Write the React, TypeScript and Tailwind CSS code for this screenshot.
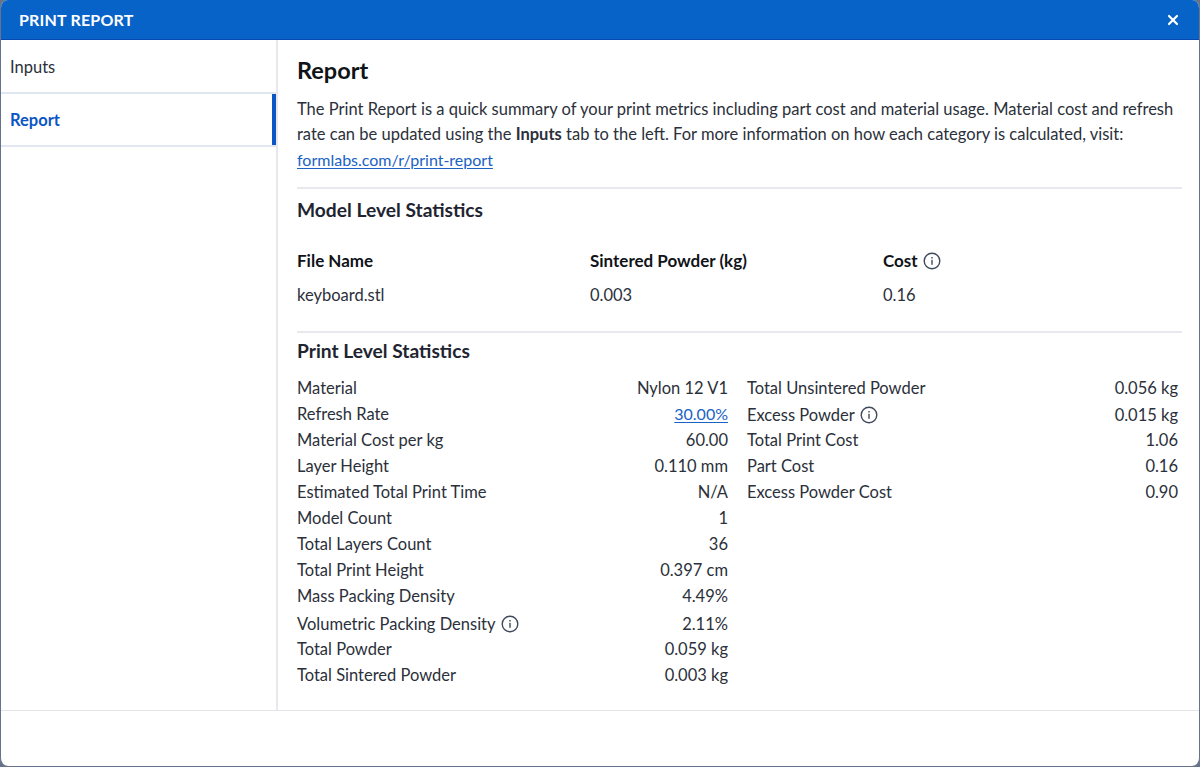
import { X } from "lucide-react";

type Row = { label: string; value: string; info?: boolean; link?: boolean; tall?: boolean };

const leftRows: Row[] = [
  { label: "Material", value: "Nylon 12 V1" },
  { label: "Refresh Rate", value: "30.00%", link: true },
  { label: "Material Cost per kg", value: "60.00" },
  { label: "Layer Height", value: "0.110 mm" },
  { label: "Estimated Total Print Time", value: "N/A" },
  { label: "Model Count", value: "1" },
  { label: "Total Layers Count", value: "36" },
  { label: "Total Print Height", value: "0.397 cm" },
  { label: "Mass Packing Density", value: "4.49%" },
  { label: "Volumetric Packing Density", value: "2.11%", info: true, tall: true },
  { label: "Total Powder", value: "0.059 kg" },
  { label: "Total Sintered Powder", value: "0.003 kg" },
];

const rightRows: Row[] = [
  { label: "Total Unsintered Powder", value: "0.056 kg" },
  { label: "Excess Powder", value: "0.015 kg", info: true },
  { label: "Total Print Cost", value: "1.06" },
  { label: "Part Cost", value: "0.16" },
  { label: "Excess Powder Cost", value: "0.90" },
];

function InfoIcon() {
  return (
    <svg width="18" height="18" viewBox="0 0 18 18" fill="none" className="shrink-0">
      <circle cx="9" cy="9" r="7.8" stroke="#3f4a5c" strokeWidth="1.4" />
      <rect x="8.3" y="7.8" width="1.4" height="5" fill="#3f4a5c" />
      <rect x="8.3" y="5" width="1.4" height="1.5" fill="#3f4a5c" />
    </svg>
  );
}

function StatRow({ row }: { row: Row }) {
  let rowClass = "flex h-[26px] items-center justify-between";
  if (row.tall) rowClass = "flex h-[27px] items-center justify-between pt-[3px]";
  else if (row.info) rowClass = "flex h-[26px] items-center justify-between pt-[2px]";

  return (
    <div className={rowClass}>
      <span className="flex items-center gap-[5px]">
        {row.label}
        {row.info && <InfoIcon />}
      </span>
      {row.link ? (
        <a className="text-[16px] text-[#1a62c4] underline underline-offset-2">{row.value}</a>
      ) : (
        <span>{row.value}</span>
      )}
    </div>
  );
}

export default function App() {
  return (
    <div className="h-[767px] w-[1200px] bg-[#66738a] font-['Lato',sans-serif] text-[16.5px] text-[#2b303a]">
      <div className="flex h-[766px] flex-col overflow-hidden rounded-[8px] border-x border-[#66738a] bg-white">
        <header className="flex h-[40px] shrink-0 items-center justify-between border-b border-[#0a47b0] bg-[#0863c8] px-[18px]">
          <span className="text-[16px] font-bold tracking-[0.2px] text-white">PRINT REPORT</span>
          <X size={16} strokeWidth={3.2} className="text-white" />
        </header>

        <div className="flex h-[671px] shrink-0 border-b border-[#e2e4e8]">
          <nav className="w-[277px] shrink-0 border-r-2 border-[#e8e9ec]">
            <div className="flex h-[54px] items-center border-b-2 border-[#e1e7f0] pl-[9px] pt-[2px]">Inputs</div>
            <div className="relative flex h-[53px] items-center border-b-2 border-[#e1e7f0] pl-[9px] pt-[2px] font-bold text-[#0b55c4]">
              Report
              <div className="absolute right-0 top-0 h-full w-[4px] bg-[#0b55c4]" />
            </div>
          </nav>

          <main className="min-w-0 flex-1 pl-[19px] pr-[17px]">
            <h1 className="mt-[16px] text-[23.5px] font-bold leading-[28px] text-[#101318]">Report</h1>
            <p className="mt-[13px] leading-[25px]">
              The Print Report is a quick summary of your print metrics including part cost and material usage. Material cost and refresh rate can be updated using the <b>Inputs</b> tab to the left. For more information on how each category is calculated, visit:{" "}
              <a className="text-[16px] text-[#1a62c4] underline underline-offset-2">formlabs.com/r/print-report</a>
            </p>

            <section className="mt-[14px] border-t-2 border-[#e8e9ec]">
              <h2 className="mt-[9px] text-[19.2px] font-bold leading-[24px] text-[#1e2430]">Model Level Statistics</h2>
              <div className="mt-[27px] grid grid-cols-[293px_293px_1fr] text-[17px] font-bold leading-[24px] text-[#101318]">
                <span>File Name</span>
                <span>Sintered Powder (kg)</span>
                <span className="flex items-center gap-[5px]">
                  Cost <InfoIcon />
                </span>
              </div>
              <div className="mt-[10px] grid grid-cols-[293px_293px_1fr] leading-[24px]">
                <span>keyboard.stl</span>
                <span>0.003</span>
                <span>0.16</span>
              </div>
            </section>

            <section className="mt-[24px] border-t-2 border-[#e8e9ec]">
              <h2 className="mt-[6px] text-[19.2px] font-bold leading-[24px] text-[#1e2430]">Print Level Statistics</h2>
              <div className="mt-[12px] grid grid-cols-[431px_431px] gap-x-[19px]">
                <div>
                  {leftRows.map((row) => (
                    <StatRow key={row.label} row={row} />
                  ))}
                </div>
                <div>
                  {rightRows.map((row) => (
                    <StatRow key={row.label} row={row} />
                  ))}
                </div>
              </div>
            </section>
          </main>
        </div>
      </div>
    </div>
  );
}
